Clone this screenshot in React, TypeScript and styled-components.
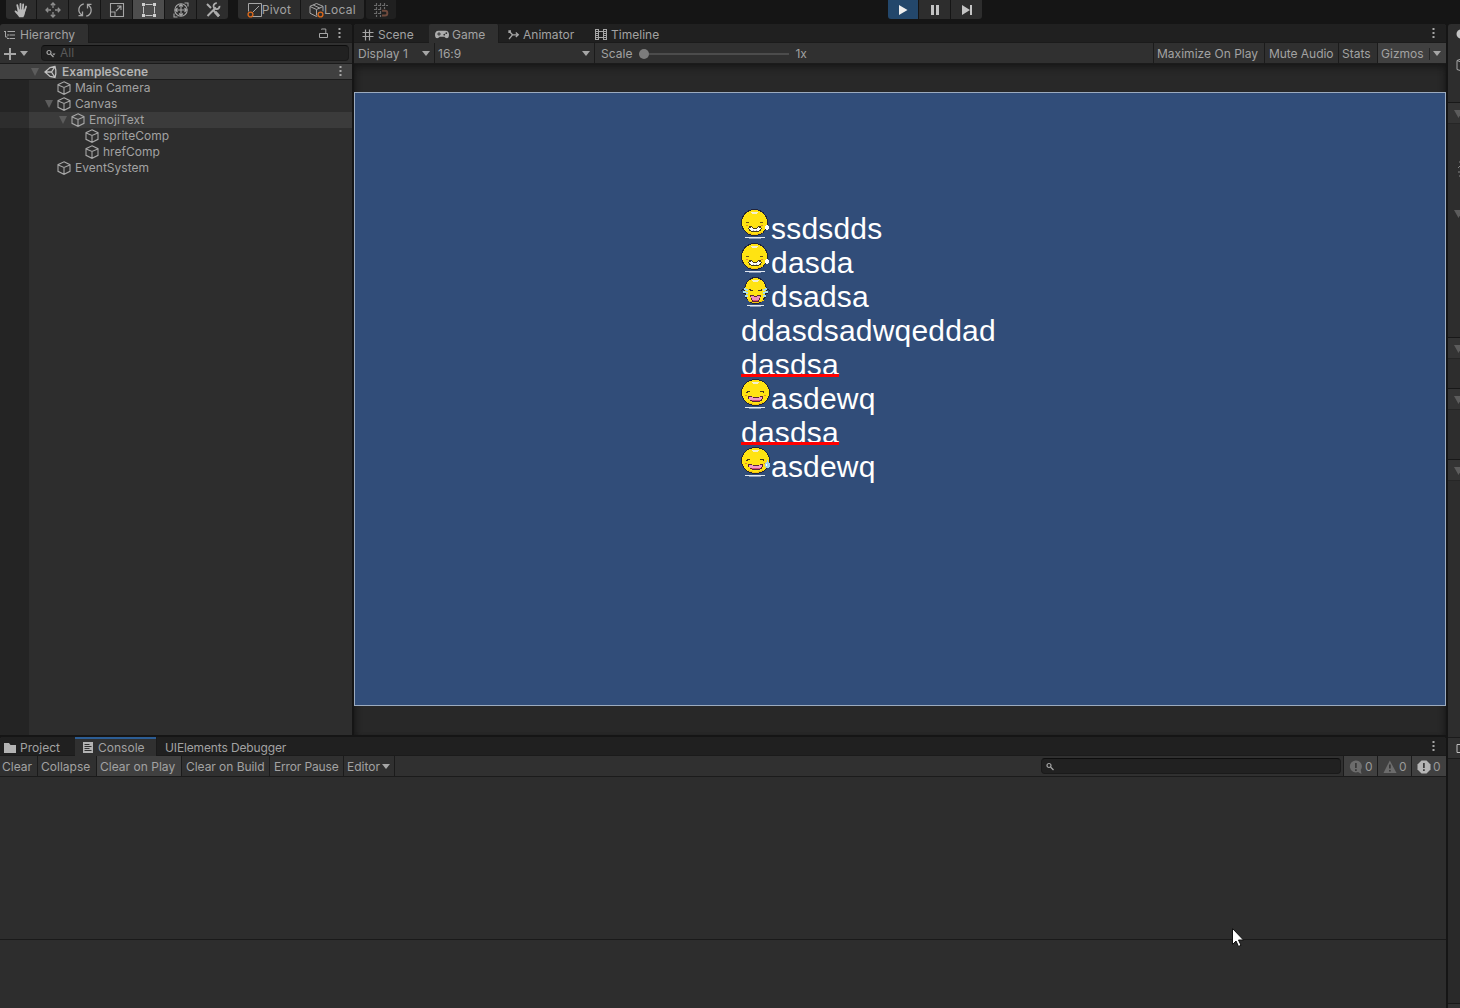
import React from 'react';
import styled, { createGlobalStyle, css } from 'styled-components';

const c = {
  frame: '#151515',
  strip: '#202020',
  panel: '#2d2d2d',
  bar: '#303030',
  line: '#1b1b1b',
  on: '#404040',
  text: '#a2a2a2',
  icon: '#a6a6a6',
};

const Global = createGlobalStyle`
  * { box-sizing: border-box; }
  body { margin: 0; background: ${c.frame}; overflow: hidden; }
  svg { display: block; flex: none; }
`;

const Editor = styled.div`
  width: 1460px;
  height: 1008px;
  overflow: hidden;
  display: flex;
  flex-direction: column;
  background: ${c.frame};
  color: ${c.text};
  font: 12px/16px Inter, 'Liberation Sans', sans-serif;
  letter-spacing: 0.02px;
  white-space: nowrap;
  cursor: default;
`;

const MainToolbar = styled.div`
  height: 24px;
  flex: none;
  display: flex;
  padding-left: 6px;
`;

const ButtonGroup = styled.div<{ $gap?: number }>`
  display: flex;
  gap: 1px;
  height: 19px;
  margin-right: ${(p) => p.$gap ?? 0}px;
  border-radius: 0 0 3px 3px;
  overflow: hidden;
  letter-spacing: 0.25px;
`;

const ToolButton = styled.div<{ $w: number; $state?: 'on' | 'play' | 'off' }>`
  width: ${(p) => p.$w}px;
  display: flex;
  align-items: center;
  justify-content: center;
  background: ${(p) =>
    p.$state === 'on' ? '#4d4d4d' : p.$state === 'play' ? '#23476b' : p.$state === 'off' ? '#202020' : '#2d2d2d'};
`;

const Workspace = styled.div`
  display: flex;
  gap: 2px;
  flex: 1;
  min-height: 0;
`;

const MainColumn = styled.div`
  width: 1446px;
  display: flex;
  flex-direction: column;
  gap: 2px;
`;

const TopRow = styled.div`
  display: flex;
  gap: 2px;
  height: 711px;
`;

const Panel = styled.section<{ $w?: number }>`
  display: flex;
  flex-direction: column;
  min-height: 0;
  ${(p) => (p.$w ? css`width: ${p.$w}px;` : css`flex: 1;`)}
  background: ${c.panel};
  border-radius: 3px 3px 0 0;
  overflow: hidden;
`;

const TabStrip = styled.div`
  height: 19px;
  flex: none;
  display: flex;
  background: ${c.strip};
  box-shadow: inset 0 -1px ${c.line};
`;

const Tab = styled.div<{ $w: number; $active?: boolean; $focus?: boolean; $pad?: number; $gap?: number; $ls?: number }>`
  width: ${(p) => p.$w}px;
  display: flex;
  align-items: center;
  gap: ${(p) => p.$gap ?? 4}px;
  padding: 2px 0 0 ${(p) => p.$pad ?? 8}px;
  ${(p) =>
    p.$active &&
    css`
      background: ${c.bar};
      border-right: 1px solid ${c.line};
      border-radius: 2px 2px 0 0;
    `}
  ${(p) => p.$focus && css`box-shadow: inset 0 2px #2c5d94; border-radius: 0;`}
  ${(p) => p.$ls !== undefined && css`letter-spacing: ${p.$ls}px;`}
`;

const Spacer = styled.div`
  flex: 1;
`;

const StripActions = styled.div<{ $right: number }>`
  display: flex;
  align-items: center;
  gap: 10px;
  padding: 0 ${(p) => p.$right}px 0 0;
`;

const PanelBar = styled.div`
  height: 21px;
  flex: none;
  display: flex;
  align-items: stretch;
  background: ${c.bar};
  border-bottom: 1px solid ${c.line};
`;

const BarItem = styled.div<{ $w?: number; $on?: boolean; $pad?: number; $noLine?: boolean; $ls?: number }>`
  ${(p) => p.$w && css`width: ${p.$w}px;`}
  display: flex;
  align-items: center;
  padding-left: ${(p) => p.$pad ?? 3}px;
  padding-top: 1px;
  background: ${(p) => (p.$on ? c.on : 'transparent')};
  border-right: ${(p) => (p.$noLine ? 0 : 1)}px solid ${c.line};
  ${(p) => p.$ls !== undefined && css`letter-spacing: ${p.$ls}px;`}
`;

const Caret = styled.i<{ $ml?: string; $mr?: number }>`
  width: 0;
  height: 0;
  flex: none;
  border: 4px solid transparent;
  border-top: 5px solid ${c.icon};
  border-bottom: 0;
  margin-left: ${(p) => p.$ml ?? 'auto'};
  margin-right: ${(p) => p.$mr ?? 0}px;
`;

const SearchBox = styled.div<{ $w: number }>`
  width: ${(p) => p.$w}px;
  height: 16px;
  margin-top: 2px;
  display: flex;
  align-items: center;
  gap: 4px;
  padding-left: 4px;
  background: #212121;
  border: 1px solid #1a1a1a;
  border-top-color: #0d0d0d;
  border-radius: 4px;
  color: #5a5a5a;
`;

const HierarchyBar = styled(PanelBar)`
  padding-left: 3px;
`;

const SceneRow = styled.div`
  height: 16px;
  flex: none;
  display: flex;
  align-items: center;
  padding: 0 10.5px 0 31px;
  background: #404040;
  border-bottom: 1px solid #1c1c1c;
  color: #b4b4b4;
  font-weight: 600;
  letter-spacing: 0.03px;
`;

const Tree = styled.div`
  flex: 1;
  background: linear-gradient(90deg, #242424 29px, ${c.panel} 29px);
`;

const TreeRow = styled.div<{ $depth: number; $selected?: boolean }>`
  height: 16px;
  display: flex;
  align-items: center;
  padding-left: ${(p) => 31 + p.$depth * 14}px;
  ${(p) => p.$selected && css`background: linear-gradient(90deg, #2d2d2d 29px, #3b3b3b 29px);`}
`;

const Foldout = styled.i<{ $open?: boolean }>`
  width: 0;
  height: 0;
  flex: none;
  margin-right: 4px;
  border: 4.5px solid transparent;
  border-top: 8px solid ${(p) => (p.$open ? '#5c5c5c' : 'transparent')};
  border-bottom: 0;
`;

const SceneIconBox = styled.span`
  margin-right: 5px;
  padding-left: 1px;
`;
const CubeBox = styled.span`
  margin-right: 4px;
`;

const GameView = styled.div`
  flex: 1;
  padding-top: 28px;
  background: #282828;
  box-shadow: inset 0 7px 7px -4px #171717, inset -6px 0 6px -5px #171717, inset 6px 0 6px -5px #171717;
`;

const GameCanvas = styled.div`
  height: 614px;
  border: 1px solid #9cabbf;
  background: #314d79;
  padding: 119px 0 0 386px;
`;

const EmojiLine = styled.div`
  height: 34px;
  display: flex;
  align-items: flex-start;
  color: #fff;
  font: 30px/34px 'Liberation Sans', Arial, sans-serif;
  letter-spacing: 0.2px;
`;

const EmojiSlot = styled.span`
  width: 30px;
  flex: none;
  margin: -3px 0 0 0;
  svg { overflow: visible; }
`;

const Href = styled.span`
  position: relative;
  &::after {
    content: '';
    position: absolute;
    left: 0;
    right: 0;
    top: 26px;
    height: 3px;
    background: #ff0000;
  }
`;

const SliderTrack = styled.div`
  width: 150px;
  height: 10px;
  margin: 0 6px 0 7px;
  display: flex;
  align-items: center;
  background: linear-gradient(#4c4c4c, #4c4c4c) 0 50% / 100% 2px no-repeat;
`;

const SliderThumb = styled.div`
  width: 10px;
  height: 10px;
  border-radius: 50%;
  background: #7c7c7c;
`;

const GizmoDivider = styled.div`
  width: 1px;
  height: 12px;
  margin-left: 5px;
  background: #262626;
`;

const ConsoleList = styled.div`
  height: 163px;
  flex: none;
  border-bottom: 1px solid #1a1a1a;
`;

const Counter = styled.div<{ $w: number }>`
  width: ${(p) => p.$w}px;
  display: flex;
  align-items: center;
  gap: 2px;
  padding: 1px 0 0 5px;
  background: ${c.on};
  border-left: 1px solid ${c.line};
  color: #9a9a9a;
`;

const InspectorColumn = styled.div`
  width: 12px;
  display: flex;
  flex-direction: column;
  overflow: hidden;
`;

const InspectorHead = styled.div`
  height: 78px;
  flex: none;
  background: ${c.panel};
  border-radius: 3px 0 0 0;
  padding: 5px 0 0 8px;
`;

const InspectorHeader = styled.div<{ $plain?: boolean }>`
  height: 22px;
  flex: none;
  padding: 7px 0 0 6px;
  background: ${(p) => (p.$plain ? c.panel : '#343434')};
  border-top: 1px solid ${(p) => (p.$plain ? c.panel : '#181818')};
  border-bottom: 1px solid ${(p) => (p.$plain ? c.panel : '#262626')};
`;

const InspectorBody = styled.div<{ $h: number; $pt?: number }>`
  height: ${(p) => p.$h}px;
  flex: none;
  padding: ${(p) => p.$pt ?? 0}px 0 0 10px;
  background: ${c.panel};
`;

const PreviewHead = styled.div`
  height: 22px;
  flex: none;
  display: flex;
  align-items: center;
  gap: 4px;
  padding-left: 4px;
  background: ${c.bar};
  border-top: 1px solid ${c.line};
  border-bottom: 1px solid ${c.line};
`;

const PreviewLine = styled.div`
  width: 1px;
  height: 20px;
  background: ${c.line};
`;

const PreviewBody = styled.div`
  height: 245px;
  flex: none;
  background: #292929;
  border-bottom: 1px solid #171717;
`;
const PreviewFoot = styled.div`
  flex: 1;
  background: #303030;
`;

const ButtonLabel = styled.span`
  padding-top: 1px;
`;

const Cursor = styled.div`
  position: absolute;
  left: 1232px;
  top: 928px;
`;

type IconProps = { w?: number; h?: number; vb: string; children: React.ReactNode; color?: string; sw?: number };
const Icon = ({ w = 16, h = 16, vb, children, color = c.icon, sw = 1 }: IconProps) => (
  <svg width={w} height={h} viewBox={vb} fill="none" stroke={color} strokeWidth={sw}>
    {children}
  </svg>
);

const Kebab = () => (
  <Icon w={3} h={11} vb="0 0 3 11">
    <path d="M.5 1h2M.5 5h2M.5 9h2" strokeWidth="2" />
  </Icon>
);

const Cube = () => (
  <Icon w={14} h={14} vb="0 0 14 14" sw={1.1}>
    <path d="M7 .8 13 3.7v6.600L7 13.300 1 10.300V3.700zM1.200 4 7 6.500 12.800 4M7 6.500v6.500" />
  </Icon>
);

const UnityLogo = () => (
  <Icon w={13} h={14} vb="0 0 13 14" sw={1.3} color="#c0c0c0">
    <path d="M11 1.500 6 2.600 1 7l5 4.400 5 1.100.8-3.500v-4zM11 1.500 7.500 7H1.400M7.500 7l3.500 5.500" />
  </Icon>
);

const Magnifier = ({ menu }: { menu?: boolean }) => (
  <Icon w={10} h={9} vb="0 0 10 9" sw={1.2}>
    <circle cx="3" cy="3.500" r="2" />
    <path d="m4.500 5 3 3" />
    {menu && <path d="M6.300 4.500h3.200L7.900 6.500z" fill={c.icon} stroke="none" />}
  </Icon>
);

const Hand = () => (
  <Icon vb="0 0 16 16" color="#b9b9b9" sw={1.8}>
    <path d="M5.400 8 4.300 3.200M7.500 8V1.800M9.700 8l.5-5.600M11.600 9l1.500-4.500" strokeLinecap="round" />
    <path d="M4.600 7.500h7.800L12 11c-.4 2-1 3-1.600 4.200H6.200C5 13 3 11.600 1.500 9.200c.2-1.200 1.600-1 3.100.8z" fill="#b9b9b9" stroke="none" />
  </Icon>
);

const MoveTool = () => (
  <Icon vb="0 0 16 16" color="#8f8f8f" sw={1.3}>
    <path d="M8 1v5M8 10v5M1 8h5M10 8h5M5.800 3.200 8 1l2.200 2.200M5.800 12.800 8 15l2.200-2.200M3.200 5.800 1 8l2.200 2.200M12.800 5.800 15 8l-2.200 2.200" />
  </Icon>
);

const RotateTool = () => (
  <Icon vb="0 0 16 16" sw={1.3}>
    <path d="M6.800 1.800C1.200 3.200.2 9.800 4.700 13M1.500 13.600h4v-4M9.200 14.200c5.600-1.400 6.600-8 2.100-11.200M14.500 2.400h-4v4" />
  </Icon>
);

const ScaleTool = () => (
  <Icon vb="0 0 16 16" sw={1.1}>
    <path d="M1.500 1.500h13v13h-13zM1.500 10h4.500v4.500M7 9l4.500-4.500M8 4h4v4" />
  </Icon>
);

const RectTool = () => (
  <Icon vb="0 0 16 16" color="#c4c4c4" sw={1}>
    <path d="M4.500 2.500h7M4.500 13.500h7M2.500 4.500v7M13.500 4.500v7" />
    <path d="M1 1h3v3H1zM12 1h3v3h-3zM1 12h3v3H1zM12 12h3v3h-3z" fill="#d0d0d0" stroke="none" />
  </Icon>
);

const TransformTool = () => (
  <Icon vb="0 0 16 16" color="#a8a8a8" sw={1.1}>
    <circle cx="8" cy="8" r="6.200" />
    <path d="M8 3v10M3 8h10M6 4.500l2-2 2 2M6 11.500l2 2 2-2M4.500 6l-2 2 2 2M11.500 6l2 2-2 2M11.500 1H15v3.500M4.500 15H1v-3.500" />
  </Icon>
);

const CustomTool = () => (
  <Icon vb="0 0 16 16" color="#adadad" sw={2}>
    <path d="m2 2 4 4M9 9l5 5.200M2.500 14 11 5.500" />
    <path d="M14.500 3.800A3 3 0 1 1 11.800 1.200" strokeWidth="1.800" />
    <path d="m10.200 10 3.800 4.200" strokeWidth="3" />
  </Icon>
);

const PivotIcon = () => (
  <Icon w={15} h={16} vb="0 0 15 16">
    <path d="M5 14.500h9.500v-13h-13v8M5.500 10.500l6.500-6.500" />
    <circle cx="3.500" cy="12.500" r="2.400" stroke="#d8691d" strokeWidth="1.400" />
  </Icon>
);

const LocalIcon = () => (
  <Icon w={15} h={16} vb="0 0 15 16">
    <path d="M8.500 14 7.500 14.500 1 11.200V4.300L7.500 1.500 14 4.300v5M1 4.500l6.500 3 6.500-3M7.500 7.500v6M4.200 3l6.500 3" />
    <circle cx="11.500" cy="12.500" r="2.400" stroke="#d8691d" strokeWidth="1.400" />
  </Icon>
);

const SnapIcon = () => (
  <Icon vb="0 0 16 16" color="#6a6a6a" sw={1.2}>
    <path d="M3.500 1v14M7.500 1v14M11.500 1v6M1 3.500h14M1 7.500h7M1 11.500h6" strokeDasharray="3 1" />
    <path d="M9 8.800h3a2.300 2.300 0 0 1 0 4.700H9" stroke="#6f4a3d" strokeWidth="1.900" />
  </Icon>
);

const HierarchyIcon = () => (
  <Icon w={12} h={10} vb="0 0 12 10">
    <path d="M0 1.500h2M3.500 1.500H11M3 5h2M5.500 5H11M3 8.500h2M5.500 8.500H11M1.500 2v5h2" />
  </Icon>
);

const LockIcon = () => (
  <Icon w={9} h={11} vb="0 0 9 11">
    <path d="M.5 5.500h8v4h-8zM2.500 1.500V1h4.300v4.500" />
  </Icon>
);

const GridIcon = () => (
  <Icon w={12} h={12} vb="0 0 12 12">
    <path d="M3.500.5v11M7.500.5v11M.5 3.500h11M.5 7.500h11" strokeWidth="1.200" />
  </Icon>
);

const GamepadIcon = () => (
  <svg width="14" height="9" viewBox="0 0 14 9">
    <path d="M4 .8C1.200.5 0 2.400 0 4.700 0 8.800 3 9 4.500 6.700h5C11 9 14 8.800 14 4.700 14 2.400 12.800.5 10 .8z" fill="#adadad" />
    <path d="M2.200 4h3.600M4 2.200v3.600" stroke={c.bar} />
    <circle cx="9.300" cy="4.700" r=".9" fill={c.bar} />
    <circle cx="11.300" cy="3.200" r=".9" fill={c.bar} />
  </svg>
);

const AnimatorIcon = () => (
  <Icon w={12} h={10} vb="0 0 12 10" sw={1.3}>
    <path d="M1 1l3.500 3.800H10M1 9l3.500-4.200M7.800 2.500 10.300 4.800 7.800 7M1 3V1h2" />
  </Icon>
);

const FilmIcon = () => (
  <Icon w={12} h={12} vb="0 0 12 12">
    <path d="M.5 0v11M3.500 0v11M8.500 0v11M11.500 0v11M3.500 2.500h5M3.500 8.500h5M0 .5h4M0 2.500h4M0 4.500h4M0 6.500h4M0 8.500h4M0 10.500h4M8 .5h4M8 2.500h4M8 4.500h4M8 6.500h4M8 8.500h4M8 10.500h4" />
  </Icon>
);

const FolderIcon = () => (
  <svg width="12" height="10" viewBox="0 0 12 10">
    <path d="M0 0h5l1.500 2H12v8H0z" fill="#b3b3b3" />
  </svg>
);

const ConsoleIcon = () => (
  <svg width="10" height="11" viewBox="0 0 10 11">
    <path d="M0 0h10v11H0z" fill="#b3b3b3" />
    <path d="M1.500 2.500h5M1.500 4.500h7M1.500 6.500h5M1.500 8.500h7" stroke={c.bar} />
  </svg>
);

const BadgeIcon = ({ kind }: { kind: 'info' | 'warn' | 'error' }) => {
  const fill = kind === 'error' ? '#b5b5b5' : '#6c6c6c';
  return (
    <svg width="14" height="14" viewBox="0 0 14 14">
      {kind === 'info' && <path d="M6.500.5a6 6 0 1 0 2.500 11.600L12.500 14l-.8-4A6 6 0 0 0 6.500.5z" fill={fill} />}
      {kind === 'warn' && <path d="M6.800.5 13.500 13H.5z" fill={fill} />}
      {kind === 'error' && <path d="M4.500.5h5l4 4v5l-4 4h-5l-4-4v-5z" fill={fill} />}
      <path d={kind === 'warn' ? 'M6.900 4.500v4M6.900 10v1.500' : 'M6.900 3v5M6.900 9.300v1.600'} stroke="#383838" strokeWidth="1.700" />
    </svg>
  );
};

const InspectorFoldout = () => (
  <svg width="9" height="8" viewBox="0 0 9 8">
    <path d="M0 0h9L4.500 8z" fill="#5c5c5c" />
  </svg>
);

type Mood = 'grin' | 'cry' | 'laugh' | 'sweat';
const Emoji = ({ mood }: { mood: Mood }) => {
  const cry = mood === 'cry';
  const wide = mood === 'laugh' || mood === 'sweat';
  const cx = wide || cry ? 14.5 : 13.5;
  const rx = cry ? 11 : wide ? 14 : 13;
  return (
    <svg width="30" height="31" viewBox="0 0 30 31" shapeRendering="crispEdges">
      <ellipse cx={cx} cy="13.500" rx={rx} ry="13" fill="#ffe312" stroke="#20233a" />
      <path d={`M${cx - 8} 23.500h2v1h3v1h6v-1h3v-1h2`} stroke="#f6c60c" fill="none" />
      <path d={`M${cx - 3.5} 3.500h7M${cx - 2.5} 4.500h5`} stroke="#f4f0cf" />
      <path d={`M${cry ? 6 : 4} 28.500h${cry ? 17 : 20}`} stroke="#e4eaf2" />
      <path d={`M${cry ? 9 : 8} 29.500h${cry ? 11 : 12}`} stroke="#8d9dba" />
      {mood === 'grin' && (
        <>
          <path d="M5 13.500h3M19 13.500h3" stroke="#6b5514" />
          <path d="M5 16.500h2M20 16.500h2" stroke="#e8892e" />
          <path d="M8 17h3v1h1v1h4v-1h1v-1h3v2h1v1h-1v2h-2v1h-8v-1H8v-2H7v-1h1z" fill="#4a3c1c" />
          <path d="M8 19h2v-1h1v1h1v1h4v-1h1v-1h1v1h2v1h-1v1h-1v1h-8v-1H9v-1H8z" fill="#fff" />
          <path d="M12 21h1v1h-1zM15 21h1v1h-1z" fill="#b9b9b9" />
          <path d="M25 16h2v1h1v3h-1v1h-2v-1h-1v-3h1z" fill="#fff" />
        </>
      )}
      {cry && (
        <>
          <path d="M8 12.500h1v1h3M21 12.500h-1v1h-3" stroke="#4a3c1c" fill="none" />
          <path d="M3 11h2v1h2v2H5v-1H3zM2 14h3v1h2v2H5v-1H2zM4 18h3v2H4zM26 11h-2v1h-2v2h2v-1h2zM27 14h-3v1h-2v2h2v-1h3zM25 18h-3v2h3z" fill="#a6dcee" />
          <path d="M1 12.500h2M0 13.500h1M2 16.500h3M3 10.500h1M4 20.500h2M28 12.500h-2M29 13.500h-1M27 16.500h-3M26 10.500h-1M25 20.500h-2" stroke="#1c2436" />
          <path d="M9 18h4v1h3v-1h4v2h-1v3h-1v2h-7v-2h-1v-3H9z" fill="#5a2436" />
          <path d="M10 19h3v1h3v-1h3v2h-1v2h-7v-2h-1z" fill="#ef8fbd" />
          <path d="M12 23h5v1h-5z" fill="#d84c79" />
        </>
      )}
      {wide && (
        <>
          <path d="M5 13.500h1v-1h3M23 13.500h-1v-1h-3" stroke="#4a3c1c" fill="none" />
          <path d="M4 16.500h2M23 16.500h2" stroke="#e8892e" />
          <path d="M7 17h4v1h8v-1h3v3h-1v2h-2v1h-8v-1H9v-2H7z" fill="#5a2436" />
          <path d="M8 18h4v1h6v-1h3v2h-1v1H9v-1H8z" fill="#f29cc6" />
          <path d="M11 21h8v1h-8z" fill="#d84c79" />
          {mood === 'sweat' && (
            <>
              <path d="M26 13h1v2h1v1h1v4h-1v1h-3v-1h-1v-4h1v-1h1z" fill="#a3d5ec" />
              <path d="M25 17h1v2h-1z" fill="#fff" />
            </>
          )}
        </>
      )}
    </svg>
  );
};

const lines: { text: string; mood?: Mood; href?: boolean }[] = [
  { text: 'ssdsdds', mood: 'grin' },
  { text: 'dasda', mood: 'grin' },
  { text: 'dsadsa', mood: 'cry' },
  { text: 'ddasdsadwqeddad' },
  { text: 'dasdsa', href: true },
  { text: 'asdewq', mood: 'laugh' },
  { text: 'dasdsa', href: true },
  { text: 'asdewq', mood: 'sweat' },
];

const nodes: { name: string; depth: number; open?: boolean; selected?: boolean }[] = [
  { name: 'Main Camera', depth: 1 },
  { name: 'Canvas', depth: 1, open: true },
  { name: 'EmojiText', depth: 2, open: true, selected: true },
  { name: 'spriteComp', depth: 3 },
  { name: 'hrefComp', depth: 3 },
  { name: 'EventSystem', depth: 1 },
];

const tools = [Hand, MoveTool, RotateTool, ScaleTool, RectTool, TransformTool, CustomTool];

const Toolbar = () => (
  <MainToolbar>
    <ButtonGroup $gap={10}>
      {tools.map((T, i) => (
        <ToolButton key={i} $w={i === 0 ? 30 : 31} $state={i === 4 ? 'on' : undefined}>
          <T />
        </ToolButton>
      ))}
    </ButtonGroup>
    <ButtonGroup $gap={2}>
      <ToolButton $w={62}>
        <PivotIcon />
        <ButtonLabel>Pivot</ButtonLabel>
      </ToolButton>
      <ToolButton $w={63}>
        <LocalIcon />
        <ButtonLabel>Local</ButtonLabel>
      </ToolButton>
    </ButtonGroup>
    <ButtonGroup $gap={492}>
      <ToolButton $w={30} $state="off">
        <SnapIcon />
      </ToolButton>
    </ButtonGroup>
    <ButtonGroup>
      <ToolButton $w={30} $state="play">
        <svg width="10" height="10" viewBox="0 0 10 10">
          <path d="M1 0 9.500 5 1 10z" fill="#eee" />
        </svg>
      </ToolButton>
      <ToolButton $w={31}>
        <svg width="8" height="10" viewBox="0 0 8 10">
          <path d="M0 0h3v10H0zM5 0h3v10H5z" fill="#c4c4c4" />
        </svg>
      </ToolButton>
      <ToolButton $w={31}>
        <svg width="10" height="10" viewBox="0 0 10 10">
          <path d="M0 0 8 5 0 10zM8 0h2v10H8z" fill="#c4c4c4" />
        </svg>
      </ToolButton>
    </ButtonGroup>
  </MainToolbar>
);

const Hierarchy = () => (
  <Panel $w={352}>
    <TabStrip>
      <Tab $w={89} $active $pad={4}>
        <HierarchyIcon />
        Hierarchy
      </Tab>
      <Spacer />
      <StripActions $right={11.5}>
        <LockIcon />
        <Kebab />
      </StripActions>
    </TabStrip>
    <HierarchyBar>
      <BarItem $w={38} $pad={1} $noLine>
        <Icon w={12} h={12} vb="0 0 12 12" sw={2}>
          <path d="M6 0v12M0 6h12" />
        </Icon>
        <Caret $ml="4px" />
      </BarItem>
      <SearchBox $w={308}>
        <Magnifier menu />
        All
      </SearchBox>
    </HierarchyBar>
    <SceneRow>
      <Foldout $open />
      <SceneIconBox>
        <UnityLogo />
      </SceneIconBox>
      ExampleScene
      <Spacer />
      <Kebab />
    </SceneRow>
    <Tree>
      {nodes.map((n) => (
        <TreeRow key={n.name} $depth={n.depth} $selected={n.selected}>
          <Foldout $open={n.open} />
          <CubeBox>
            <Cube />
          </CubeBox>
          {n.name}
        </TreeRow>
      ))}
    </Tree>
  </Panel>
);

const Game = () => (
  <Panel $w={1092}>
    <TabStrip>
      <Tab $w={75}>
        <GridIcon />
        Scene
      </Tab>
      <Tab $w={70} $active $pad={6} $gap={3}>
        <GamepadIcon />
        Game
      </Tab>
      <Tab $w={87} $pad={9} $gap={3}>
        <AnimatorIcon />
        Animator
      </Tab>
      <Tab $w={90} $pad={9}>
        <FilmIcon />
        Timeline
      </Tab>
      <Spacer />
      <StripActions $right={11.5}>
        <Kebab />
      </StripActions>
    </TabStrip>
    <PanelBar>
      <BarItem $w={81} $pad={4}>
        Display 1
        <Caret $mr={4} />
      </BarItem>
      <BarItem $w={160}>
        16:9
        <Caret $mr={4} />
      </BarItem>
      <BarItem $pad={6} $noLine>
        Scale
        <SliderTrack>
          <SliderThumb />
        </SliderTrack>
        1x
      </BarItem>
      <Spacer />
      <BarItem $w={1} $pad={0} />
      <BarItem $w={111}>Maximize On Play</BarItem>
      <BarItem $w={74} $pad={4} $ls={-0.05}>Mute Audio</BarItem>
      <BarItem $w={39} $pad={3}>Stats</BarItem>
      <BarItem $w={68} $on $noLine>
        Gizmos
        <GizmoDivider />
        <Caret $mr={5} />
      </BarItem>
    </PanelBar>
    <GameView>
      <GameCanvas>
        {lines.map((l, i) => (
          <EmojiLine key={i}>
            {l.mood && (
              <EmojiSlot>
                <Emoji mood={l.mood} />
              </EmojiSlot>
            )}
            {l.href ? <Href>{l.text}</Href> : l.text}
          </EmojiLine>
        ))}
      </GameCanvas>
    </GameView>
  </Panel>
);

const Console = () => (
  <Panel>
    <TabStrip>
      <Tab $w={75} $pad={4}>
        <FolderIcon />
        Project
      </Tab>
      <Tab $w={82} $active $focus $gap={5}>
        <ConsoleIcon />
        Console
      </Tab>
      <Tab $w={140} $ls={-0.13}>UIElements Debugger</Tab>
      <Spacer />
      <StripActions $right={11.5}>
        <Kebab />
      </StripActions>
    </TabStrip>
    <PanelBar>
      <BarItem $w={38} $pad={2}>Clear</BarItem>
      <BarItem $w={59}>Collapse</BarItem>
      <BarItem $w={85} $on>Clear on Play</BarItem>
      <BarItem $w={88} $pad={4} $ls={-0.05}>Clear on Build</BarItem>
      <BarItem $w={74} $pad={4} $ls={-0.15}>Error Pause</BarItem>
      <BarItem $w={51}>
        Editor
        <Caret $mr={4} />
      </BarItem>
      <Spacer />
      <SearchBox $w={300}>
        <Magnifier />
      </SearchBox>
      <BarItem $w={2} $pad={0} $noLine />
      <Counter $w={34}>
        <BadgeIcon kind="info" />0
      </Counter>
      <Counter $w={34}>
        <BadgeIcon kind="warn" />0
      </Counter>
      <Counter $w={35}>
        <BadgeIcon kind="error" />0
      </Counter>
    </PanelBar>
    <ConsoleList />
  </Panel>
);

const Inspector = () => (
  <InspectorColumn>
    <InspectorHead>
      <svg width="10" height="42" viewBox="0 0 10 42">
        <circle cx="5" cy="5" r="4.500" fill="#c5c5c5" />
        <path d="M9 28.500 1 31.500v9l8 2.500M1 31.500l8 3" stroke={c.icon} fill="none" />
      </svg>
    </InspectorHead>
    <InspectorHeader><InspectorFoldout /></InspectorHeader>
    <InspectorBody $h={78} $pt={36}>
      <svg width="4" height="18" viewBox="0 0 4 18">
        <path d="M1 2h3M0 8l2-2h2M0 12h4M1 16h3" stroke="#858585" fill="none" />
      </svg>
    </InspectorBody>
    <InspectorHeader $plain><InspectorFoldout /></InspectorHeader>
    <InspectorBody $h={113} />
    <InspectorHeader><InspectorFoldout /></InspectorHeader>
    <InspectorBody $h={29} />
    <InspectorHeader><InspectorFoldout /></InspectorHeader>
    <InspectorBody $h={49} />
    <InspectorHeader><InspectorFoldout /></InspectorHeader>
    <InspectorBody $h={256} />
    <PreviewHead>
      <PreviewLine />
      <svg width="8" height="9" viewBox="0 0 8 9">
        <path d="M1 .5v8h7M1 .5h7" stroke="#bdbdbd" fill="none" />
      </svg>
    </PreviewHead>
    <PreviewBody />
    <PreviewFoot />
  </InspectorColumn>
);

export default function App() {
  return (
    <Editor>
      <Global />
      <Toolbar />
      <Workspace>
        <MainColumn>
          <TopRow>
            <Hierarchy />
            <Game />
          </TopRow>
          <Console />
        </MainColumn>
        <Inspector />
      </Workspace>
      <Cursor>
        <svg width="12" height="20" viewBox="0 0 12 20">
          <path d="M.5.5v16l3.500-3.500 2.500 5.500 2.500-1.200-2.500-5.300h5z" fill="#fff" stroke="#111" />
        </svg>
      </Cursor>
    </Editor>
  );
}
